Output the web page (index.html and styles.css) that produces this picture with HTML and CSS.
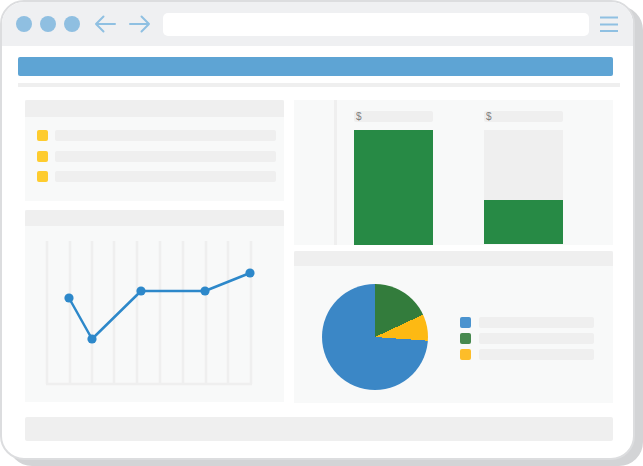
FILE: index.html
```html
<!DOCTYPE html>
<html>
<head>
<meta charset="utf-8">
<link rel="stylesheet" href="styles.css">
</head>
<body>
<div class="frame">
  <div class="topbar">
    <span class="dot"></span><span class="dot"></span><span class="dot"></span>
    <svg class="arrow arrow-left" width="22" height="18" viewBox="0 0 22 18"><path d="M21 9H2M9.5 1.5L2 9l7.5 7.5" fill="none" stroke="#8fc0e2" stroke-width="2" stroke-linecap="round" stroke-linejoin="round"/></svg>
    <svg class="arrow arrow-right" width="22" height="18" viewBox="0 0 22 18"><path d="M1 9h19M12.5 1.5L20 9l-7.5 7.5" fill="none" stroke="#8fc0e2" stroke-width="2" stroke-linecap="round" stroke-linejoin="round"/></svg>
    <div class="address"></div>
    <svg class="menu" width="20" height="18" viewBox="0 0 20 18"><path d="M1 2.5h18M1 9.5h18M1 16h18" fill="none" stroke="#8fc0e2" stroke-width="2"/></svg>
  </div>
  <div class="content">
    <div class="titlebar"></div>
    <div class="divider"></div>
    <div class="dash">
      <div class="col col-left">
        <div class="panel panel-list">
          <div class="panel-head"></div>
          <div class="panel-body list-body">
            <div class="list-row"><span class="sq yellow"></span><span class="line"></span></div>
            <div class="list-row"><span class="sq yellow"></span><span class="line"></span></div>
            <div class="list-row"><span class="sq yellow"></span><span class="line"></span></div>
          </div>
        </div>
        <div class="panel panel-line">
          <div class="panel-head"></div>
          <div class="panel-body">
            <svg class="linechart" width="259" height="176" viewBox="0 0 259 176">
              <g stroke="#efefef" stroke-width="2.5" fill="none">
                <path d="M22 15V158M45 15V158M67 15V158M89 15V158M112 15V158M135 15V158M158 15V158M181 15V158M203 15V158M226 15V158"/>
                <path d="M21 158H227"/>
              </g>
              <polyline points="44,72 67,113 116,65 180,65 225,47" fill="none" stroke="#2d88ca" stroke-width="2.5" stroke-linejoin="round"/>
              <g fill="#2d88ca">
                <circle cx="44" cy="72" r="4.6"/>
                <circle cx="67" cy="113" r="4.6"/>
                <circle cx="116" cy="65" r="4.6"/>
                <circle cx="180" cy="65" r="4.6"/>
                <circle cx="225" cy="47" r="4.6"/>
              </g>
            </svg>
          </div>
        </div>
      </div>
      <div class="col col-right">
        <div class="panel panel-bars">
          <div class="axis"></div>
          <div class="bar-col">
            <div class="bar-label">$</div>
            <div class="bar-track"><div class="bar-fill" style="height:100%"></div></div>
          </div>
          <div class="bar-col bar-col-2">
            <div class="bar-label">$</div>
            <div class="bar-track"><div class="bar-fill" style="height:39%"></div></div>
          </div>
        </div>
        <div class="panel panel-pie">
          <div class="panel-head head-small"></div>
          <div class="panel-body pie-body">
            <div class="pie"></div>
            <div class="legend">
              <div class="legend-row"><span class="sq blue"></span><span class="lline"></span></div>
              <div class="legend-row"><span class="sq green"></span><span class="lline"></span></div>
              <div class="legend-row"><span class="sq yellow2"></span><span class="lline"></span></div>
            </div>
          </div>
        </div>
      </div>
    </div>
    <div class="footer"></div>
  </div>
</div>
</body>
</html>
```

FILE: styles.css
```css
html, body {
  margin: 0;
  padding: 0;
  background: #ffffff;
  font-family: "Liberation Sans", Arial, sans-serif;
}

body {
  height: 466px;
  overflow: hidden;
}

.frame {
  box-sizing: border-box;
  width: 635px;
  height: 460px;
  border: 2px solid #dcdddf;
  border-radius: 24px;
  background: #ffffff;
  box-shadow: 8px 6px 0 #d3d4d6;
  overflow: hidden;
}

.topbar {
  height: 44px;
  background: #eff0f2;
  display: flex;
  align-items: center;
  padding-left: 14px;
}

.dot {
  width: 16px;
  height: 16px;
  border-radius: 50%;
  background: #8fbfe1;
  margin-right: 8px;
}

.arrow-left {
  margin-left: 6px;
}

.arrow-right {
  margin-left: 13px;
}

.address {
  margin-left: 12px;
  width: 426px;
  height: 23px;
  background: #ffffff;
  border-radius: 5px;
  margin-top: 1px;
}

.menu {
  margin-left: 10px;
}

.content {
  padding: 11px 20px 0 16px;
}

.titlebar {
  height: 19px;
  background: #5ea4d4;
  border-radius: 2px;
}

.divider {
  height: 4px;
  background: #efefef;
  margin: 7px -7px 13px 0;
}

.dash {
  display: flex;
  gap: 10px;
  padding-left: 7px;
}

.col {
  display: flex;
  flex-direction: column;
}

.col-left {
  width: 259px;
  gap: 9px;
}

.col-right {
  flex: 1;
  gap: 6px;
}

.panel {
  background: #f8f9f9;
  display: flex;
  flex-direction: column;
}

.panel-head {
  height: 17px;
  background: #efefef;
  border-radius: 2px 2px 0 0;
}

.head-small {
  height: 15px;
}

.panel-body {
  flex: 1;
}

.panel-list {
  height: 101px;
}

.list-body {
  padding: 13px 8px 0 12px;
  display: flex;
  flex-direction: column;
  gap: 9.5px;
}

.list-row {
  display: flex;
  align-items: center;
  gap: 7px;
}

.sq {
  width: 11px;
  height: 11px;
  border-radius: 2px;
  flex: none;
}

.yellow {
  background: #fecc2f;
}

.blue {
  background: #4a93cf;
}

.green {
  background: #47894f;
}

.yellow2 {
  background: #fdbd29;
}

.line {
  flex: 1;
  height: 11px;
  background: #efefef;
  border-radius: 2px;
}

.panel-line {
  height: 192px;
}

.linechart {
  display: block;
}

.panel-bars {
  height: 145px;
  flex-direction: row;
  padding-left: 40px;
}

.axis {
  width: 3px;
  background: #efefef;
}

.bar-col {
  width: 79px;
  margin-left: 17px;
  display: flex;
  flex-direction: column;
  padding-top: 11px;
}

.bar-col-2 {
  margin-left: 51px;
}

.bar-label {
  height: 11px;
  background: #efefef;
  border-radius: 2px;
  font-size: 10px;
  line-height: 11px;
  color: #808080;
  padding-left: 2px;
  margin-bottom: 8px;
}

.bar-track {
  flex: 1;
  background: #efefef;
  display: flex;
  flex-direction: column;
  justify-content: flex-end;
}

.bar-col-2 .bar-track {
  margin-bottom: 1px;
}

.bar-fill {
  background: #278a45;
}

.panel-pie {
  height: 152px;
}

.pie-body {
  display: flex;
  align-items: flex-start;
  padding: 18px 0 0 28px;
}

.pie {
  width: 106px;
  height: 106px;
  border-radius: 50%;
  background: conic-gradient(#337c3c 0deg 65deg, #fdb913 65deg 94deg, #3b87c6 94deg 360deg);
  flex: none;
}

.legend {
  margin-left: 32px;
  margin-top: 33px;
  display: flex;
  flex-direction: column;
  gap: 5px;
}

.legend-row {
  display: flex;
  align-items: center;
  gap: 8px;
}

.lline {
  width: 115px;
  height: 11px;
  background: #efefef;
  border-radius: 2px;
}

.footer {
  margin: 14px 0 0 7px;
  height: 24px;
  background: #efefef;
  border-radius: 2px;
}
```
